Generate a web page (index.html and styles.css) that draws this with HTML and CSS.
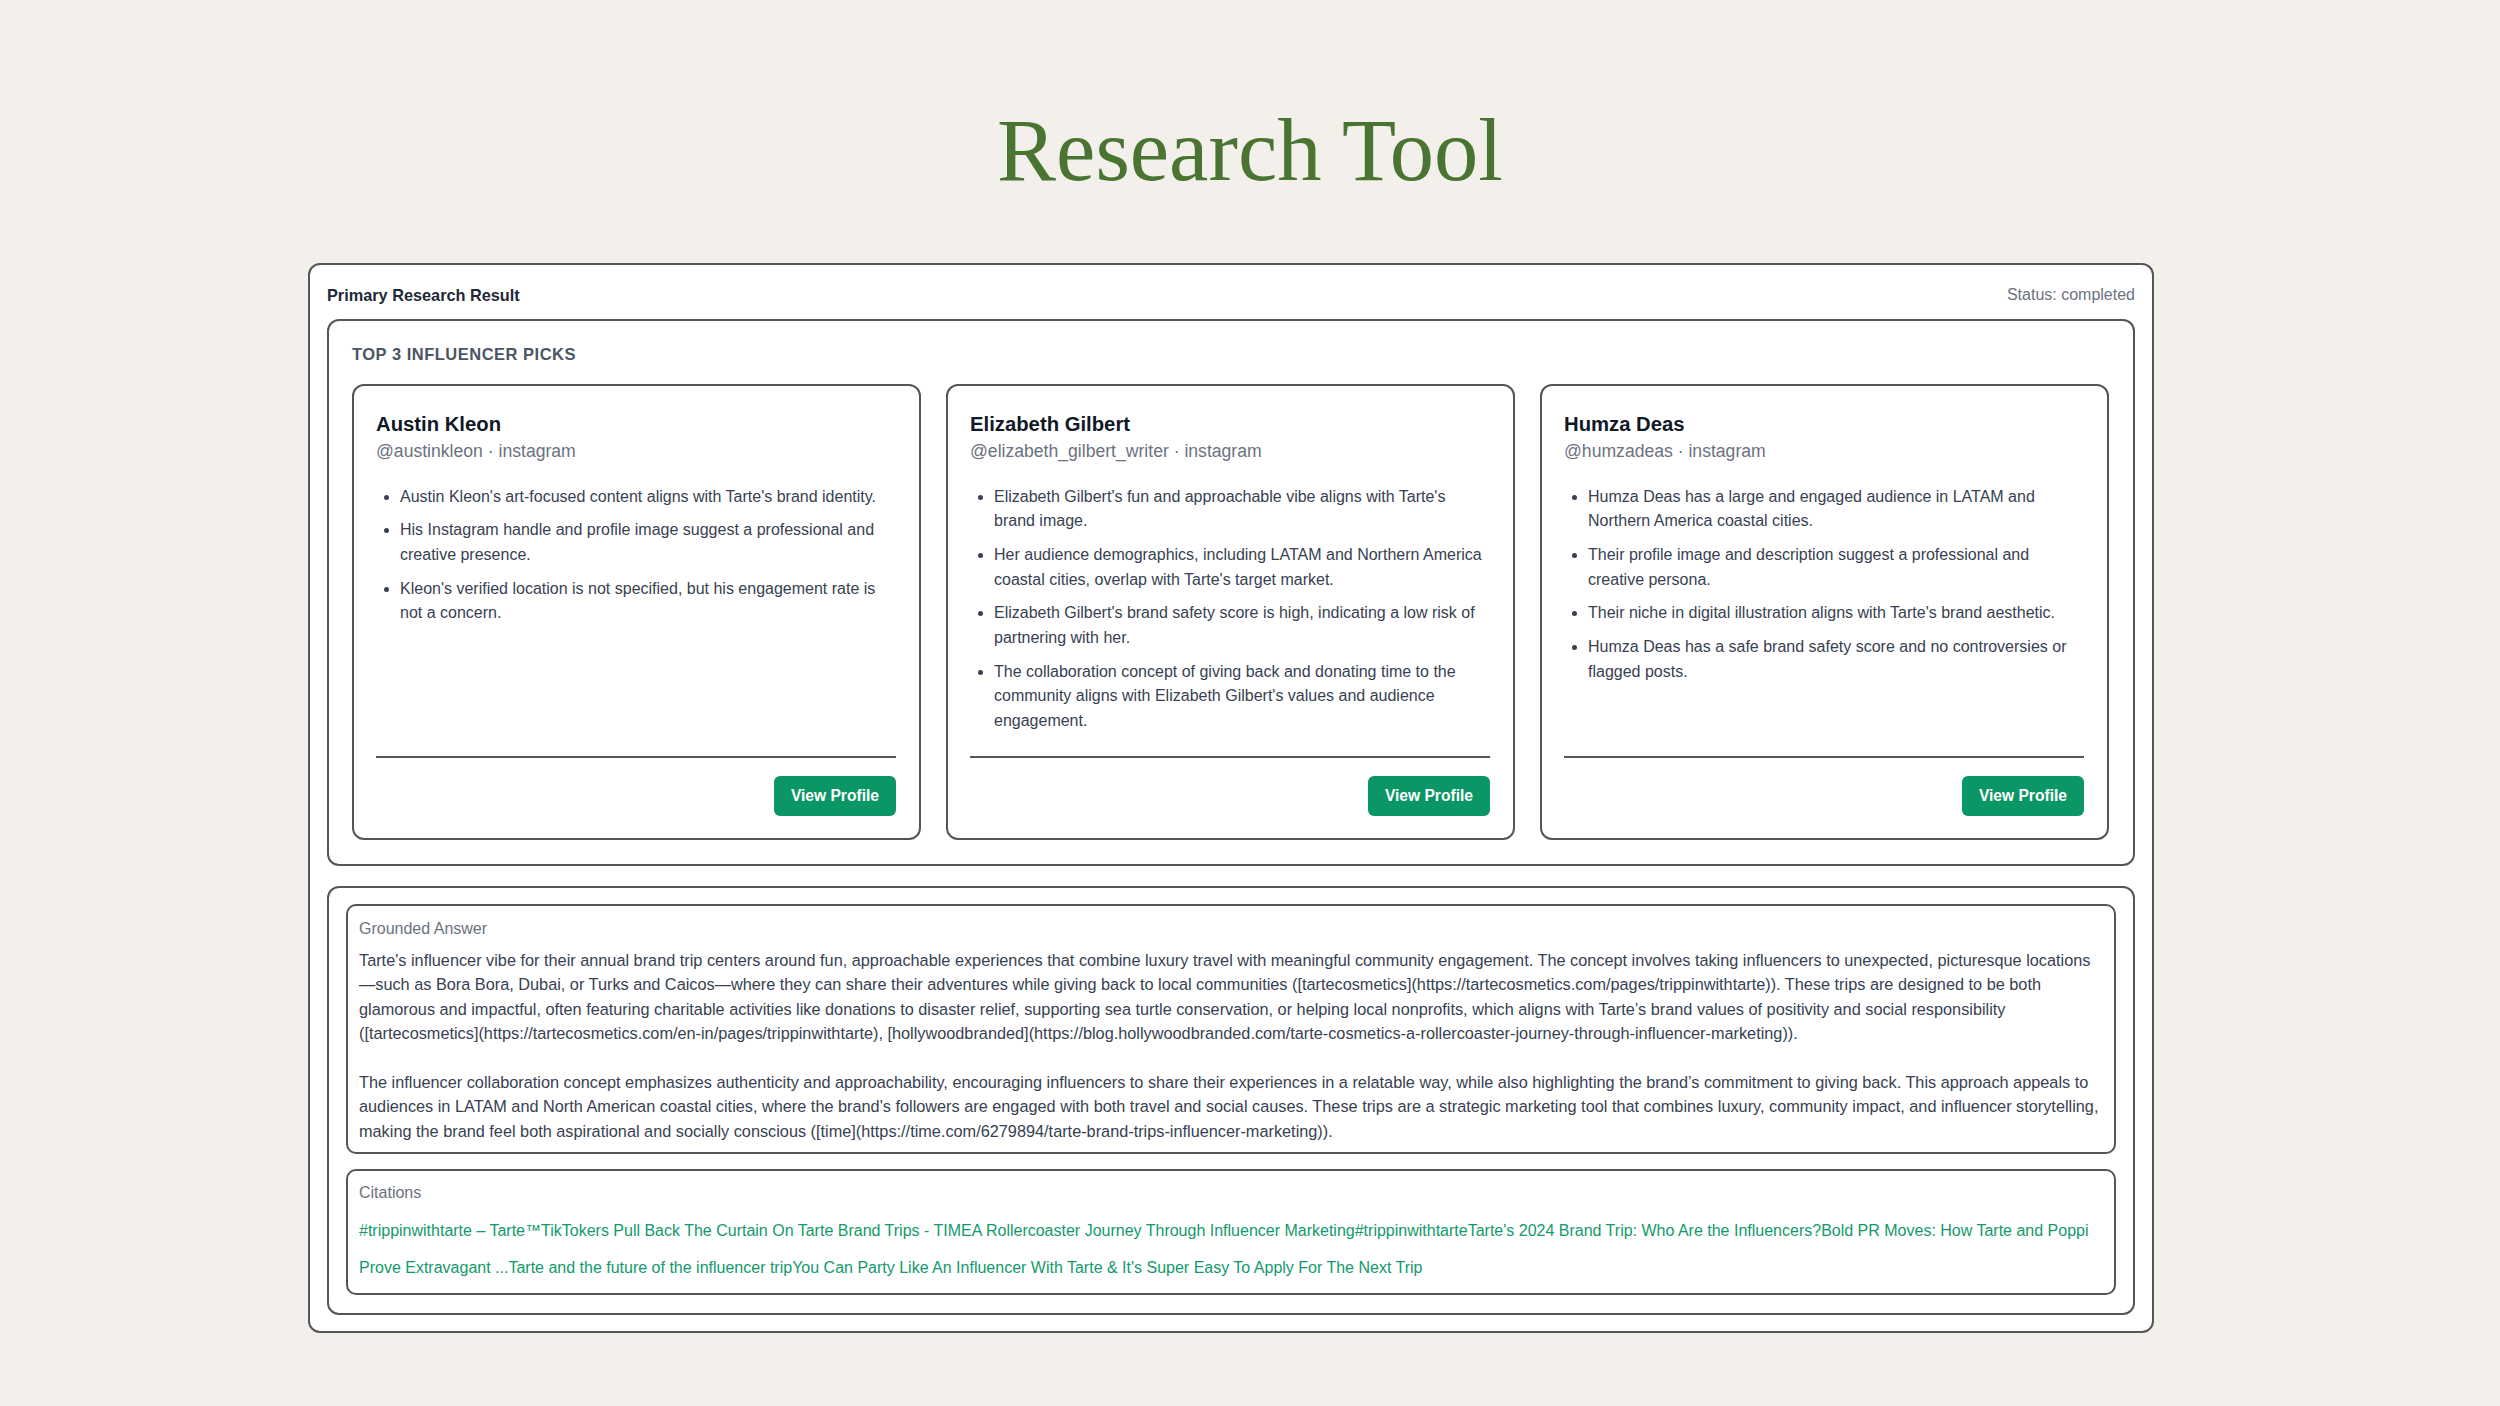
FILE: index.html
```html
<!DOCTYPE html>
<html lang="en">
<head>
<meta charset="utf-8">
<title>Research Tool</title>
<link rel="stylesheet" href="styles.css">
</head>
<body>
<main class="page">
  <h1 class="page-title">Research Tool</h1>

  <section class="result">
    <header class="result-head">
      <h2 class="result-title">Primary Research Result</h2>
      <span class="result-status">Status: completed</span>
    </header>

    <div class="picks">
      <h3 class="picks-title">Top 3 Influencer Picks</h3>
      <div class="pick-grid">
        <article class="pick">
          <h4 class="pick-name">Austin Kleon</h4>
          <p class="pick-handle">@austinkleon · instagram</p>
          <ul class="pick-reasons">
            <li>Austin Kleon's art-focused content aligns with Tarte's brand identity.</li>
            <li>His Instagram handle and profile image suggest a professional and creative presence.</li>
            <li>Kleon's verified location is not specified, but his engagement rate is not a concern.</li>
          </ul>
          <footer class="pick-foot"><a class="btn" href="#">View Profile</a></footer>
        </article>

        <article class="pick">
          <h4 class="pick-name">Elizabeth Gilbert</h4>
          <p class="pick-handle">@elizabeth_gilbert_writer · instagram</p>
          <ul class="pick-reasons">
            <li>Elizabeth Gilbert's fun and approachable vibe aligns with Tarte's brand image.</li>
            <li>Her audience demographics, including LATAM and Northern America coastal cities, overlap with Tarte's target market.</li>
            <li>Elizabeth Gilbert's brand safety score is high, indicating a low risk of partnering with her.</li>
            <li>The collaboration concept of giving back and donating time to the community aligns with Elizabeth Gilbert's values and audience engagement.</li>
          </ul>
          <footer class="pick-foot"><a class="btn" href="#">View Profile</a></footer>
        </article>

        <article class="pick">
          <h4 class="pick-name">Humza Deas</h4>
          <p class="pick-handle">@humzadeas · instagram</p>
          <ul class="pick-reasons">
            <li>Humza Deas has a large and engaged audience in LATAM and Northern America coastal cities.</li>
            <li>Their profile image and description suggest a professional and creative persona.</li>
            <li>Their niche in digital illustration aligns with Tarte's brand aesthetic.</li>
            <li>Humza Deas has a safe brand safety score and no controversies or flagged posts.</li>
          </ul>
          <footer class="pick-foot"><a class="btn" href="#">View Profile</a></footer>
        </article>
      </div>
    </div>

    <div class="answer">
      <div class="panel panel--answer">
        <div class="panel-label">Grounded Answer</div>
        <div class="answer-text">
          <p>Tarte's influencer vibe for their annual brand trip centers around fun, approachable experiences that combine luxury travel with meaningful community engagement. The concept involves taking influencers to unexpected, picturesque locations—&#8288;such as Bora Bora, Dubai, or Turks and Caicos—where they can share their adventures while giving back to local communities ([tartecosmetics](https://tartecosmetics.com/pages/trippinwithtarte)). These trips are designed to be both glamorous and impactful, often featuring charitable activities like donations to disaster relief, supporting sea turtle conservation, or helping local nonprofits, which aligns with Tarte’s brand values of positivity and social responsibility ([tartecosmetics](https://tartecosmetics.com/en-in/pages/trippinwithtarte), [hollywoodbranded](https://blog.hollywoodbranded.com/tarte-cosmetics-a-rollercoaster-journey-through-influencer-marketing)).</p>
          <p>The influencer collaboration concept emphasizes authenticity and approachability, encouraging influencers to share their experiences in a relatable way, while also highlighting the brand’s commitment to giving back. This approach appeals to audiences in LATAM and North American coastal cities, where the brand's followers are engaged with both travel and social causes. These trips are a strategic marketing tool that combines luxury, community impact, and influencer storytelling, making the brand feel both aspirational and socially conscious ([time](https://time.com/6279894/tarte-brand-trips-influencer-marketing)).</p>
        </div>
      </div>

      <div class="panel panel--citations">
        <div class="panel-label">Citations</div>
        <div class="citations"><a href="#">#trippinwithtarte – Tarte™</a><a href="#">TikTokers Pull Back The Curtain On Tarte Brand Trips - TIME</a><a href="#">A Rollercoaster Journey Through Influencer Marketing</a><a href="#">#trippinwithtarte</a><a href="#">Tarte's 2024 Brand Trip: Who Are the Influencers?</a><a href="#">Bold PR Moves: How Tarte and Poppi Prove Extravagant ...</a><a href="#">Tarte and the future of the influencer trip</a><a href="#">You Can Party Like An Influencer With Tarte &amp; It's Super Easy To Apply For The Next Trip</a></div>
      </div>
    </div>
  </section>
</main>
</body>
</html>
```

FILE: styles.css
```css
* {
  box-sizing: border-box;
}

html,
body {
  margin: 0;
  padding: 0;
}

body {
  background: #f3f0eb;
  color: #374151;
  font-family: "Liberation Sans", Arial, sans-serif;
  font-size: 16px;
}

.page {
  padding: 106px 0 60px;
}

.page-title {
  margin: 0 0 68px;
  text-align: center;
  font-family: "Liberation Serif", "Times New Roman", serif;
  font-weight: 400;
  font-size: 88.5px;
  line-height: 1;
  color: #4a7431;
}

/* outer result card */
.result {
  width: 1846px;
  margin-left: 308px;
  background: #fff;
  border: 2px solid #555;
  border-radius: 12px;
  padding: 18px 17px 16px;
}

.result-head {
  display: flex;
  justify-content: space-between;
  align-items: center;
  height: 24px;
  margin-bottom: 12px;
}

.result-title {
  margin: 0;
  font-size: 16.3px;
  font-weight: 700;
  line-height: 24px;
  color: #1f2937;
}

.result-status {
  font-size: 16px;
  line-height: 24px;
  color: #6b7280;
}

/* influencer picks */
.picks {
  border: 2px solid #555;
  border-radius: 12px;
  padding: 21px 24px 24px 23px;
}

.picks-title {
  margin: 0 0 18px;
  font-size: 16.5px;
  font-weight: 700;
  line-height: 24px;
  letter-spacing: 0.5px;
  text-transform: uppercase;
  color: #4b5563;
}

.pick-grid {
  display: grid;
  grid-template-columns: repeat(3, 1fr);
  gap: 25px;
}

.pick {
  display: flex;
  flex-direction: column;
  border: 2px solid #555;
  border-radius: 12px;
  padding: 24px 23px 22px 22px;
}

.pick-name {
  margin: 0;
  font-size: 20.3px;
  font-weight: 700;
  line-height: 28px;
  color: #111827;
}

.pick-handle {
  margin: 0;
  font-size: 17.6px;
  line-height: 26px;
  color: #6b7280;
}

.pick-reasons {
  flex: 1 0 auto;
  margin: 21px 0 22px;
  padding-left: 24px;
  font-size: 16px;
  line-height: 24.7px;
  color: #374151;
}

.pick-reasons li + li {
  margin-top: 9px;
}

.pick-foot {
  margin-top: auto;
  padding-top: 18px;
  border-top: 2px solid #555;
  display: flex;
  justify-content: flex-end;
}

.btn {
  display: inline-flex;
  align-items: center;
  height: 40px;
  padding: 0 17px;
  border-radius: 6px;
  background: #0b9666;
  color: #fff;
  font-size: 15.6px;
  font-weight: 700;
  text-decoration: none;
}

/* grounded answer and citations */
.answer {
  margin-top: 20px;
  border: 2px solid #555;
  border-radius: 12px;
  padding: 16px 17px 18px;
  display: flex;
  flex-direction: column;
  gap: 15px;
}

.panel {
  border: 2px solid #555;
  border-radius: 10px;
}

.panel--answer {
  padding: 11px 5px 9px 11px;
}

.panel--citations {
  padding: 10px 5px 7px 11px;
}

.panel-label {
  font-size: 16px;
  line-height: 24px;
  color: #6b7280;
  margin-bottom: 7px;
}

.answer-text {
  font-size: 16.3px;
  line-height: 24.4px;
  color: #374151;
}

.answer-text p {
  margin: 0;
}

.answer-text p + p {
  margin-top: 24.4px;
}

.citations {
  font-size: 16px;
  line-height: 37px;
}

.citations a {
  color: #129a6c;
  text-decoration: none;
}
```
